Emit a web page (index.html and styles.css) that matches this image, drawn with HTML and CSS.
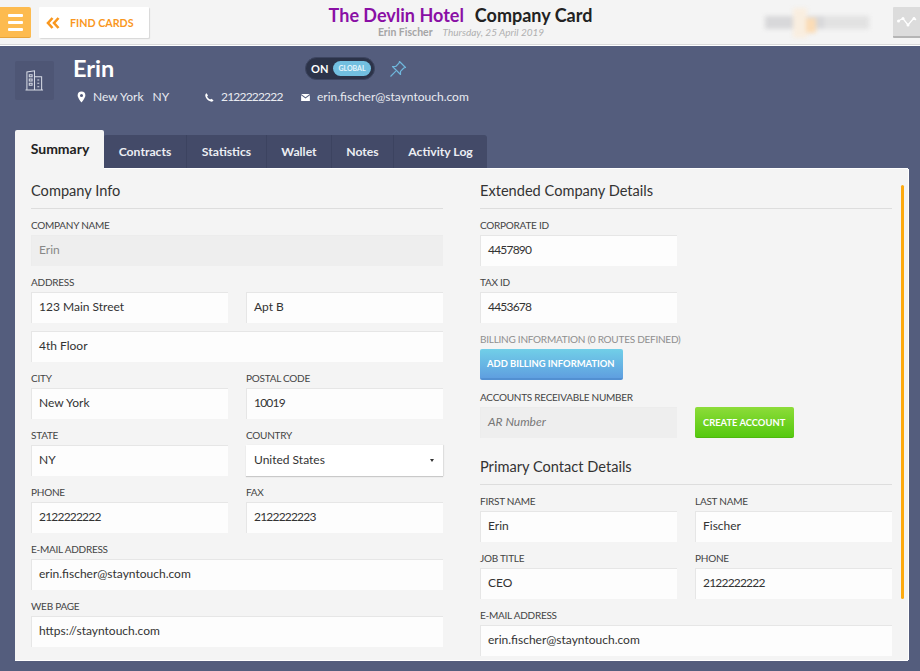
FILE: index.html
```html
<!DOCTYPE html>
<html lang="en">
<head>
<meta charset="utf-8">
<title>Company Card</title>
<link rel="stylesheet" href="styles.css">
</head>
<body>
<header class="topbar">
  <div class="top-left">
    <button class="menu-btn"><span></span><span></span><span></span></button>
    <button class="find-btn">
      <svg class="chev" viewBox="0 0 14 12" width="14" height="12"><path d="M6.500 1 2 6l4.500 5M12.500 1 8 6l4.500 5" fill="none" stroke="#f9971e" stroke-width="2.600"/></svg>
      FIND CARDS
    </button>
  </div>
  <div class="top-center">
    <div class="top-title"><span class="hotel">The Devlin Hotel</span><span class="page">Company Card</span></div>
    <div class="top-sub"><span class="user">Erin Fischer</span><em>Thursday, 25 April 2019</em></div>
  </div>
  <div class="top-right">
    <div class="blur-logo"><i class="b1"></i><i class="b4"></i><i class="b2"></i><i class="b3"></i></div>
    <button class="graph-btn">
      <svg viewBox="0 0 20 10" width="20" height="10"><path d="M1 4 6 1.500l5 6.500 6-7 2 2" fill="none" stroke="#fff" stroke-width="1.300"/><circle cx="1.500" cy="4" r="1.500" fill="#fff"/><circle cx="6" cy="1.500" r="1.500" fill="#fff"/><circle cx="11" cy="8" r="1.500" fill="#fff"/><circle cx="17" cy="1.500" r="1.500" fill="#fff"/></svg>
    </button>
  </div>
</header>

<main class="main">
  <section class="card-head">
    <div class="org-icon">
      <svg viewBox="0 0 20 22" width="19" height="21"><g fill="none" stroke="#d5d9e4" stroke-width="1.100"><path d="M2 21V2l8-1.200V21M10 7h7.500v14M.5 21h18.500"/><path d="M4.500 5h3v2h-3zM4.500 9.500h3v2h-3zM4.500 14h3v2h-3zM13 10.500h2M13 14h2M13 17.500h2"/></g></svg>
    </div>
    <div class="org-info">
      <div class="name-row">
        <h1>Erin</h1>
        <div class="toggle"><span class="on">ON</span><span class="global">GLOBAL</span></div>
        <svg class="pin" viewBox="0 0 18 18" width="18" height="18"><path d="M10.500 1.500 16.500 7.500 14.800 8 11.500 11.300 11.500 14.500 3.500 6.500 6.700 6.500 10 3.200ZM6.800 11.200 1.500 16.500" fill="none" stroke="#6fb7dc" stroke-width="1.200" stroke-linejoin="round"/></svg>
      </div>
      <div class="meta-row">
        <span class="meta loc">
          <svg viewBox="0 0 10 12" width="9" height="12"><path fill-rule="evenodd" d="M5 0a4.300 4.300 0 0 1 4.300 4.300C9.300 7 5 12 5 12S.7 7 .7 4.300A4.300 4.300 0 0 1 5 0Zm0 2.700a1.700 1.700 0 1 0 0 3.400 1.700 1.700 0 0 0 0-3.400Z" fill="#fff"/></svg>
          <span>New York</span><span class="state">NY</span>
        </span>
        <span class="meta tel">
          <svg viewBox="0 0 10 10" width="9" height="9"><path d="M1.800.3 3.300 2.800 2.400 3.900C2.900 5.300 4.200 6.700 5.800 7.300L6.900 6.400 9.500 8 8.600 9.300C8 9.900 7 9.900 5.700 9.300 3 8.200 1 6 .4 3.600.1 2.200.4 1 1.800.3Z" fill="#fff"/></svg>
          <span class="num">2122222222</span>
        </span>
        <span class="meta mail">
          <svg viewBox="0 0 10 8" width="9" height="7"><path d="M0 0h10L5 3.600zM0 1.500 5 5l5-3.500V8H0z" fill="#fff"/></svg>
          <span>erin.fischer@stayntouch.com</span>
        </span>
      </div>
    </div>
  </section>

  <nav class="tabs">
    <a class="tab active">Summary</a>
    <a class="tab">Contracts</a>
    <a class="tab">Statistics</a>
    <a class="tab">Wallet</a>
    <a class="tab">Notes</a>
    <a class="tab">Activity Log</a>
  </nav>

  <section class="panel">
    <div class="col">
      <h2>Company Info</h2>
      <div class="row"><div class="field full"><label>COMPANY NAME</label><div class="input disabled">Erin</div></div></div>
      <div class="row tight"><div class="field"><label>ADDRESS</label><div class="input">123 Main Street</div></div><div class="field"><label>&nbsp;</label><div class="input">Apt B</div></div></div>
      <div class="row"><div class="input solo">4th Floor</div></div>
      <div class="row"><div class="field"><label>CITY</label><div class="input">New York</div></div><div class="field"><label>POSTAL CODE</label><div class="input num">10019</div></div></div>
      <div class="row"><div class="field"><label>STATE</label><div class="input">NY</div></div><div class="field"><label>COUNTRY</label><div class="input select">United States<i class="caret"></i></div></div></div>
      <div class="row"><div class="field"><label>PHONE</label><div class="input num">2122222222</div></div><div class="field"><label>FAX</label><div class="input num">2122222223</div></div></div>
      <div class="row"><div class="field full"><label>E-MAIL ADDRESS</label><div class="input">erin.fischer@stayntouch.com</div></div></div>
      <div class="row"><div class="field full"><label>WEB PAGE</label><div class="input">https://stayntouch.com</div></div></div>
    </div>
    <div class="col">
      <h2>Extended Company Details</h2>
      <div class="row"><div class="field"><label>CORPORATE ID</label><div class="input num">4457890</div></div></div>
      <div class="row"><div class="field"><label>TAX ID</label><div class="input num">4453678</div></div></div>
      <div class="row"><div class="field wide"><label class="muted">BILLING INFORMATION (0 ROUTES DEFINED)</label><button class="btn blue">ADD BILLING INFORMATION</button></div></div>
      <div class="row"><div class="field"><label>ACCOUNTS RECEIVABLE NUMBER</label><div class="input disabled ph">AR Number</div></div><div class="field"><label>&nbsp;</label><button class="btn green">CREATE ACCOUNT</button></div></div>
      <h2 class="second">Primary Contact Details</h2>
      <div class="row"><div class="field"><label>FIRST NAME</label><div class="input">Erin</div></div><div class="field"><label>LAST NAME</label><div class="input">Fischer</div></div></div>
      <div class="row"><div class="field"><label>JOB TITLE</label><div class="input">CEO</div></div><div class="field"><label>PHONE</label><div class="input num">2122222222</div></div></div>
      <div class="row"><div class="field full"><label>E-MAIL ADDRESS</label><div class="input">erin.fischer@stayntouch.com</div></div></div>
    </div>
    <div class="scrollbar"></div>
  </section>
</main>
</body>
</html>
```
FILE: styles.css
```css
* { box-sizing: border-box; }
html, body { margin: 0; height: 100%; }
body {
  width: 920px;
  height: 671px;
  overflow: hidden;
  font-family: Lato, "Noto Sans", sans-serif;
  color: #333;
  background: #545d7d;
}
button { font-family: inherit; border: 0; padding: 0; }

.topbar {
  height: 46px;
  background: #f4f4f4;
  border-bottom: 1px solid #fff;
  box-shadow: inset 0 -1px 0 #d9d9d9;
  display: flex;
  justify-content: space-between;
  align-items: flex-start;
  position: relative;
}
.top-left { display: flex; gap: 8px; padding-top: 7px; }
.menu-btn {
  width: 31px;
  height: 31px;
  background: #fdbb4f;
  border-radius: 0 2px 2px 0;
  border-bottom: 1px solid #e8a53a;
  display: flex;
  flex-direction: column;
  align-items: center;
  justify-content: center;
  gap: 4px;
}
.menu-btn span { width: 15px; height: 3px; background: #fff; border-radius: 1px; }
.find-btn {
  width: 110px;
  height: 31px;
  background: #fff;
  border-radius: 1px;
  box-shadow: 1px 1px 1px #d8d8d8;
  color: #f9971e;
  font-size: 10.700px;
  font-weight: 700;
  display: flex;
  align-items: center;
  gap: 10px;
  padding-left: 7px;
}
.top-center {
  position: absolute;
  left: 0;
  right: 0;
  top: 4px;
  text-align: center;
}
.top-title { font-size: 18px; line-height: 22px; font-weight: 700; display: flex; justify-content: center; gap: 11px; padding-left: 1px; }
.hotel { color: #8a0fa5; }
.page { color: #222; }
.top-sub { font-size: 10.500px; line-height: 12px; color: #aaa; display: flex; justify-content: center; gap: 10px; padding-left: 2px; }
.top-sub .user { font-weight: 700; color: #a5a5a5; }
.top-sub em { font-size: 10px; font-style: italic; color: #b0b0b0; }
.top-right { display: flex; padding-top: 7px; position: relative; }
.blur-logo {
  width: 116px;
  height: 32px;
  position: relative;
  margin-right: 17px;
  filter: blur(2px);
}
.blur-logo i { position: absolute; display: block; }
.blur-logo .b1 { left: 5px; top: 9px; width: 104px; height: 13px; background: #d8d8da; }
.blur-logo .b2 { left: 33px; top: 1px; width: 14px; height: 30px; background: #f9eee0; }
.blur-logo .b3 { left: 46px; top: 11px; width: 10px; height: 15px; background: #fbdcb6; }
.blur-logo .b4 { left: 64px; top: 9px; width: 45px; height: 13px; background: #e2e2e2; }
.graph-btn {
  width: 27px;
  height: 31px;
  background: #dcdcdc;
  border-bottom: 2px solid #b5b5b5;
  border-radius: 1px 0 0 1px;
  display: flex;
  align-items: center;
  justify-content: center;
}

.main { height: 625px; padding: 15px 12px 11px 15px; display: flex; flex-direction: column; position: relative; }
.card-head { height: 69px; display: flex; flex: none; }
.org-icon {
  width: 39px;
  height: 39px;
  background: #4e5675;
  border-radius: 2px;
  display: flex;
  align-items: center;
  justify-content: center;
  margin-right: 20px;
}
.org-info { flex: 1; }
.name-row { height: 24px; display: flex; align-items: flex-start; position: relative; margin-top: -4px; }
.name-row h1 { margin: -1px 0 0 -1px; font-size: 23.500px; line-height: 24px; font-weight: 700; color: #fff; width: 232px; }
.toggle {
  width: 70px;
  height: 23px;
  background: #2c3349;
  border-radius: 12px;
  display: flex;
  align-items: center;
  padding: 0 3px 0 5px;
  justify-content: space-between;
  border: 1px solid #3d4560;
}
.on { color: #fff; font-size: 11px; font-weight: 700; }
.global {
  width: 38px;
  height: 15px;
  background: #72bfe0;
  color: #e6f5fb;
  border-radius: 8px;
  font-size: 7px;
  font-weight: 700;
  line-height: 15px;
  text-align: center;
}
.pin { margin: 3px 0 0 14px; }
.meta-row { display: flex; font-size: 12px; line-height: 14px; color: #e9ebf1; margin-top: 9px; margin-left: 3px; }
.meta { display: inline-flex; align-items: center; }
.meta svg { flex: none; }
.loc { width: 128px; gap: 7px; }
.state { margin-left: 2px; }
.tel { width: 96px; gap: 7px; }
.mail { gap: 7px; }
.num { letter-spacing: -.8px; }

.tabs { height: 39px; display: flex; align-items: flex-end; flex: none; }
.tab {
  height: 34px;
  background: #434a68;
  color: #eceef3;
  font-size: 12.200px;
  font-weight: 700;
  line-height: 33px;
  text-align: center;
  border-right: 1px solid #3c4360;
  flex: none;
}
.tab:nth-child(2) { width: 83px; border-radius: 2px 0 0 0; }
.tab:nth-child(3) { width: 80px; }
.tab:nth-child(4) { width: 65px; }
.tab:nth-child(5) { width: 62px; }
.tab:nth-child(6) { width: 93px; border-radius: 0 3px 0 0; border-right: 0; }
.tab.active {
  width: 89px;
  height: 39px;
  background: #f4f4f4;
  color: #222;
  font-size: 14px;
  line-height: 38px;
  border-right: 0;
  border-radius: 2px 2px 0 0;
  padding-left: 1px;
  z-index: 1;
}

.panel {
  flex: none;
  width: 893px;
  height: 491px;
  background: #f4f4f4;
  box-shadow: 0 -1px 0 #fff, 0 1px 0 #fff, 1px 0 0 #fff;
  display: grid;
  grid-template-columns: 412px 412px;
  column-gap: 37px;
  padding: 0 16px;
  overflow: hidden;
  position: relative;
}
.col { min-width: 0; }
h2 {
  margin: 0 0 6px;
  height: 40px;
  padding-top: 12px;
  font-size: 14.600px;
  line-height: 20px;
  font-weight: 400;
  color: #333;
  border-bottom: 1px solid #ddd;
}
h2.second { height: 41px; margin-top: 6px; padding-top: 13px; }
.row { display: flex; gap: 18px; margin-bottom: 6px; }
.row.tight { margin-bottom: 8px; }
.field { width: 197px; flex: none; }
.field.wide { width: 300px; }
.field.full { width: 100%; }
label {
  display: block;
  height: 20px;
  font-size: 10px;
  letter-spacing: -.25px;
  line-height: 20px;
  color: #444;
  white-space: nowrap;
}
label.muted { color: #8f8f8f; }
.input {
  height: 31px;
  background: #fdfdfd;
  border-top: 1px solid #e6e6e6;
  border-left: 1px solid #e6e6e6;
  font-size: 12px;
  line-height: 28px;
  padding-left: 7px;
  color: #333;
  white-space: nowrap;
}
.input.solo { width: 100%; }
.input.disabled { background: #eee; color: #888; border-color: #ececec; }
.input.ph { font-style: italic; color: #777; }
.input.select {
  border: 0;
  background: #fff;
  box-shadow: 0 1px 1px #c9c9c9, 1px 0 1px #e2e2e2;
  padding-left: 8px;
  line-height: 30px;
  position: relative;
}
.caret {
  position: absolute;
  right: 9px;
  top: 14px;
  border-left: 2px solid transparent;
  border-right: 2px solid transparent;
  border-top: 3px solid #333;
}
.btn {
  display: block;
  height: 31px;
  color: #fff;
  font-size: 9.400px;
  font-weight: 700;
  border-radius: 2px;
  text-align: left;
  padding-left: 7px;
  white-space: nowrap;
}
.btn.blue {
  width: 143px;
  background: linear-gradient(#71cfe8, #5f9fe0);
  border-bottom: 2px solid #5290d2;
  margin-bottom: 1px;
}
.btn.green {
  width: 99px;
  background: linear-gradient(#8ddc39, #55c90f);
  border-bottom: 1px solid #4db70d;
  padding-left: 8px;
}
.scrollbar {
  position: absolute;
  right: 4px;
  top: 16px;
  width: 3px;
  height: 414px;
  background: #fdaa10;
  border-radius: 2px;
}
```
